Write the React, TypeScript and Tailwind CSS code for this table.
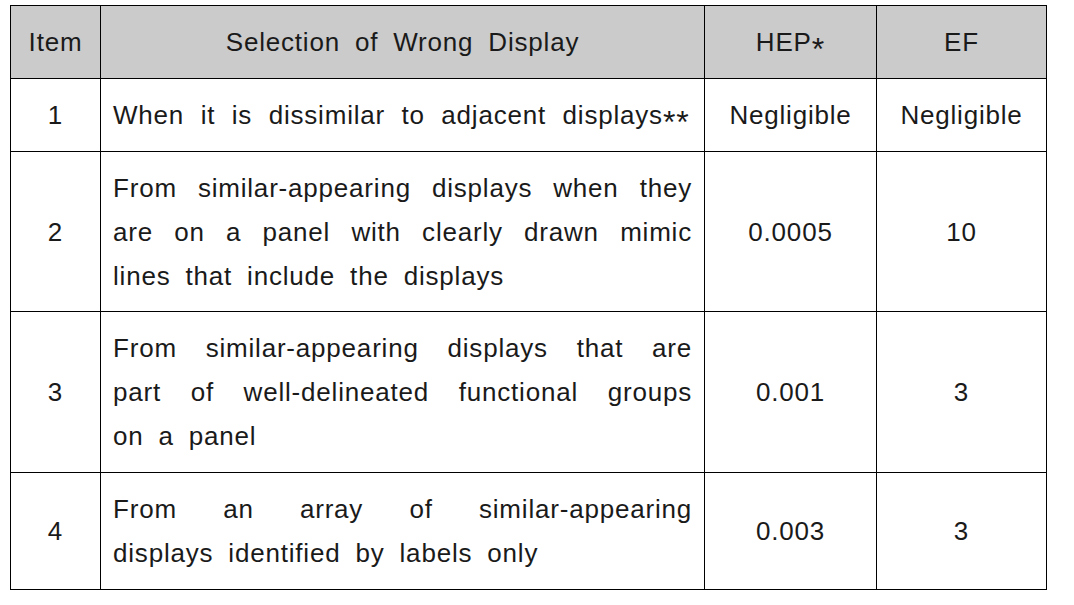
import React from "react";

const font = {
  fontFamily: '"Liberation Sans", Arial, sans-serif',
};

function Stars({ n }: { n: number }) {
  return (
    <span className="text-[32px] leading-none align-[-9px] tracking-[1px]">
      {"*".repeat(n)}
    </span>
  );
}

function JLines({ lines }: { lines: string[] }) {
  return (
    <div>
      {lines.map((l, i) => (
        <div
          key={i}
          className={
            i < lines.length - 1
              ? "text-justify [text-align-last:justify] whitespace-nowrap"
              : "text-left whitespace-nowrap"
          }
        >
          {l}
        </div>
      ))}
    </div>
  );
}

export default function App() {
  const cell = "border border-black align-middle p-0";
  return (
    <div className="bg-white w-[1074px] h-[605px] pt-[5px] pl-[10px]">
      <table
        className="table-fixed border-collapse text-[26px] leading-[44px] text-[#1a1a1a] tracking-[0.8px] [word-spacing:7px]"
        style={font}
      >
        <colgroup>
          <col className="w-[90px]" />
          <col className="w-[604px]" />
          <col className="w-[172px]" />
          <col className="w-[170px]" />
        </colgroup>
        <thead>
          <tr className="bg-[#cbcbcb]">
            <th className={`${cell} h-[73px] font-normal text-center`}>Item</th>
            <th className={`${cell} h-[73px] font-normal text-center`}>Selection of Wrong Display</th>
            <th className={`${cell} h-[73px] font-normal text-center`}>
              HEP<Stars n={1} />
            </th>
            <th className={`${cell} h-[73px] font-normal text-center`}>EF</th>
          </tr>
        </thead>
        <tbody>
          <tr>
            <td className={`${cell} h-[73px] text-center`}>1</td>
            <td className={`${cell} h-[73px] px-[12px] [word-spacing:8.5px]`}>
              When it is dissimilar to adjacent displays<Stars n={2} />
            </td>
            <td className={`${cell} h-[73px] text-center`}>Negligible</td>
            <td className={`${cell} h-[73px] text-center`}>Negligible</td>
          </tr>
          <tr>
            <td className={`${cell} h-[160px] text-center`}>2</td>
            <td className={`${cell} h-[160px] px-[12px]`}>
              <JLines
                lines={[
                  "From similar-appearing displays when they",
                  "are on a panel with clearly drawn mimic",
                  "lines that include the displays",
                ]}
              />
            </td>
            <td className={`${cell} h-[160px] text-center`}>0.0005</td>
            <td className={`${cell} h-[160px] text-center`}>10</td>
          </tr>
          <tr>
            <td className={`${cell} h-[161px] text-center`}>3</td>
            <td className={`${cell} h-[161px] px-[12px]`}>
              <JLines
                lines={[
                  "From similar-appearing displays that are",
                  "part of well-delineated functional groups",
                  "on a panel",
                ]}
              />
            </td>
            <td className={`${cell} h-[161px] text-center`}>0.001</td>
            <td className={`${cell} h-[161px] text-center`}>3</td>
          </tr>
          <tr>
            <td className={`${cell} h-[117px] text-center`}>4</td>
            <td className={`${cell} h-[117px] px-[12px]`}>
              <JLines
                lines={[
                  "From an array of similar-appearing",
                  "displays identified by labels only",
                ]}
              />
            </td>
            <td className={`${cell} h-[117px] text-center`}>0.003</td>
            <td className={`${cell} h-[117px] text-center`}>3</td>
          </tr>
        </tbody>
      </table>
    </div>
  );
}
